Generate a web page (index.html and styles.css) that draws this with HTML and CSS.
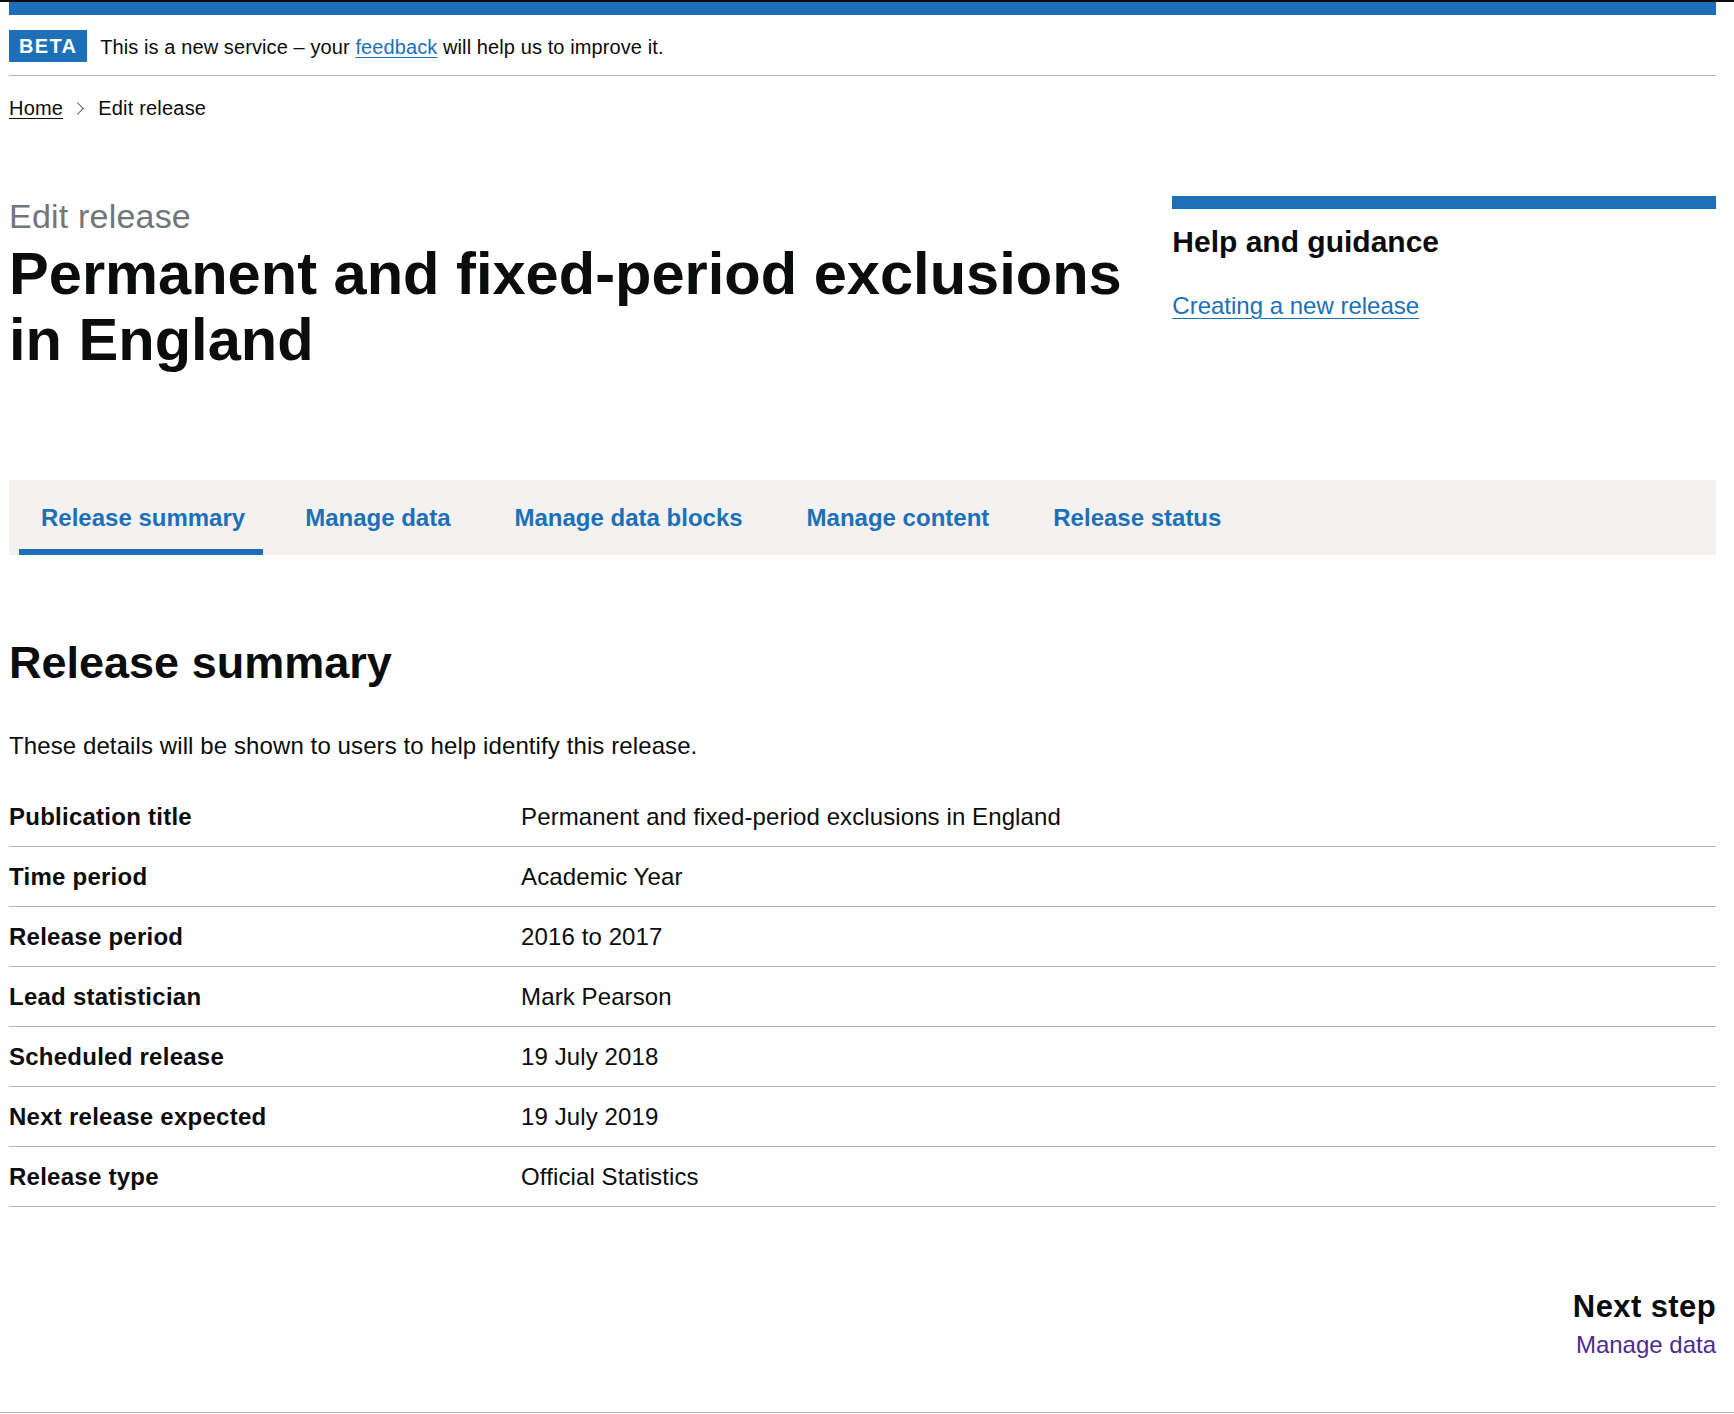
FILE: index.html
```html
<!DOCTYPE html>
<html lang="en">
<head>
<meta charset="utf-8">
<title>Edit release</title>
<link rel="stylesheet" href="styles.css">
</head>
<body>
<div class="topline"></div>
<div class="page">
  <header class="header-bar"></header>
  <div class="phase-banner">
    <strong class="tag">Beta</strong>
    <span class="phase-text">This is a new service – your <a class="link" href="#">feedback</a> will help us to improve it.</span>
  </div>
  <nav class="breadcrumbs">
    <ol class="crumb-list">
      <li class="crumb"><a class="crumb-link" href="#">Home</a></li>
      <li class="crumb crumb-current">Edit release</li>
    </ol>
  </nav>
  <main class="main">
    <div class="grid-row">
      <div class="col-two-thirds">
        <span class="caption">Edit release</span>
        <h1 class="heading-xl">Permanent and fixed-period exclusions in England</h1>
      </div>
      <div class="col-one-third">
        <aside class="related">
          <h2 class="heading-m">Help and guidance</h2>
          <a class="link related-link" href="#">Creating a new release</a>
        </aside>
      </div>
    </div>

    <nav class="tabs">
      <a class="tab tab-active" href="#">Release summary</a>
      <a class="tab" href="#">Manage data</a>
      <a class="tab" href="#">Manage data blocks</a>
      <a class="tab" href="#">Manage content</a>
      <a class="tab" href="#">Release status</a>
    </nav>

    <h2 class="heading-l">Release summary</h2>
    <p class="body">These details will be shown to users to help identify this release.</p>

    <dl class="summary-list">
      <div class="row"><dt class="key">Publication title</dt><dd class="value">Permanent and fixed-period exclusions in England</dd></div>
      <div class="row"><dt class="key">Time period</dt><dd class="value">Academic Year</dd></div>
      <div class="row"><dt class="key">Release period</dt><dd class="value">2016 to 2017</dd></div>
      <div class="row"><dt class="key">Lead statistician</dt><dd class="value">Mark Pearson</dd></div>
      <div class="row"><dt class="key">Scheduled release</dt><dd class="value">19 July 2018</dd></div>
      <div class="row"><dt class="key">Next release expected</dt><dd class="value">19 July 2019</dd></div>
      <div class="row"><dt class="key">Release type</dt><dd class="value">Official Statistics</dd></div>
    </dl>

    <div class="next-step">
      <h3 class="next-title">Next step</h3>
      <a class="next-link" href="#">Manage data</a>
    </div>
  </main>
</div>
<footer class="footer"></footer>
</body>
</html>
```
FILE: styles.css
```css
html, body {
  margin: 0;
  padding: 0;
  background: #ffffff;
}
body {
  font-family: "Liberation Sans", Arial, sans-serif;
  color: #0b0c0c;
}
.topline {
  height: 2px;
  background: #0b0c0c;
}
.page {
  margin: 0 18px 0 9px;
}
.header-bar {
  height: 13px;
  background: #1d70b8;
}
.phase-banner {
  display: flex;
  align-items: center;
  padding: 15px 0 13px;
  border-bottom: 1px solid #b1b4b6;
}
.tag {
  display: inline-block;
  box-sizing: border-box;
  height: 32px;
  padding: 5px 10px 0;
  background: #1d70b8;
  color: #ffffff;
  font-size: 20px;
  line-height: 22px;
  font-weight: 700;
  letter-spacing: 1.3px;
  text-transform: uppercase;
}
.phase-text {
  margin-left: 13px;
  padding-top: 2px;
  font-size: 20px;
  line-height: 25px;
  letter-spacing: 0.1px;
}
.link {
  color: #1d70b8;
  text-decoration: underline;
  text-decoration-thickness: 1px;
  text-underline-offset: 0.15em;
}
.breadcrumbs {
  margin-top: 20px;
}
.crumb-list {
  display: flex;
  margin: 0;
  padding: 0;
  list-style: none;
  font-size: 20px;
  line-height: 25px;
  letter-spacing: 0.2px;
}
.crumb {
  display: flex;
  align-items: center;
}
.crumb-current::before {
  content: "";
  display: inline-block;
  width: 8px;
  height: 8px;
  margin: 0 16px 0 10px;
  border-top: 1px solid #505a5f;
  border-right: 1px solid #505a5f;
  transform: rotate(45deg);
}
.crumb-link {
  color: #0b0c0c;
  text-decoration: underline;
  text-decoration-thickness: 1px;
  text-underline-offset: 0.15em;
}
.main {
  margin-top: 75px;
}
.grid-row {
  display: flex;
  margin: 0 -19px;
}
.col-two-thirds {
  box-sizing: border-box;
  width: 66.6667%;
  padding: 0 19px;
}
.col-one-third {
  box-sizing: border-box;
  width: 33.3333%;
  padding: 0 19px;
}
.caption {
  display: block;
  margin-bottom: 5px;
  font-size: 34px;
  line-height: 40px;
  letter-spacing: 0.2px;
  color: #6f777b;
}
.heading-xl {
  margin: 0;
  font-size: 59.6px;
  line-height: 66px;
  font-weight: 700;
}
.related {
  border-top: 13px solid #1d70b8;
  padding-top: 15px;
}
.heading-m {
  margin: 0 0 31px;
  font-size: 30px;
  line-height: 36px;
  font-weight: 700;
}
.related-link {
  font-size: 24px;
  line-height: 30px;
}
.tabs {
  display: flex;
  margin-top: 107px;
  padding: 0 10px;
  background: #f3f2f1;
}
.tab {
  padding: 23px 22px 16px;
  margin-right: 20px;
  border-bottom: 6px solid transparent;
  color: #1d70b8;
  font-size: 24px;
  line-height: 30px;
  font-weight: 700;
  text-decoration: none;
}
.tab-active {
  padding-right: 18px;
  border-bottom-color: #1d70b8;
}
.heading-l {
  margin: 83px 0 43px;
  font-size: 45px;
  line-height: 50px;
  font-weight: 700;
}
.body {
  margin: 0 0 26px;
  font-size: 24px;
  line-height: 30px;
  letter-spacing: 0.1px;
}
.summary-list {
  margin: 0;
  font-size: 24px;
  line-height: 30px;
}
.row {
  display: flex;
  padding: 15px 0 14px;
  border-bottom: 1px solid #b1b4b6;
}
.key {
  box-sizing: border-box;
  width: 30%;
  padding-right: 25px;
  font-weight: 700;
  letter-spacing: 0.25px;
}
.value {
  flex: 1;
  margin: 0;
  letter-spacing: 0.1px;
}
.next-step {
  margin-top: 81px;
  text-align: right;
}
.next-title {
  margin: 0 0 5px;
  font-size: 31px;
  line-height: 37px;
  font-weight: 700;
  letter-spacing: 0.4px;
}
.next-link {
  font-size: 24px;
  line-height: 30px;
  color: #4c2c92;
  text-decoration: none;
}
.footer {
  margin-top: 52px;
  height: 60px;
  border-top: 1px solid #b1b4b6;
}
```
